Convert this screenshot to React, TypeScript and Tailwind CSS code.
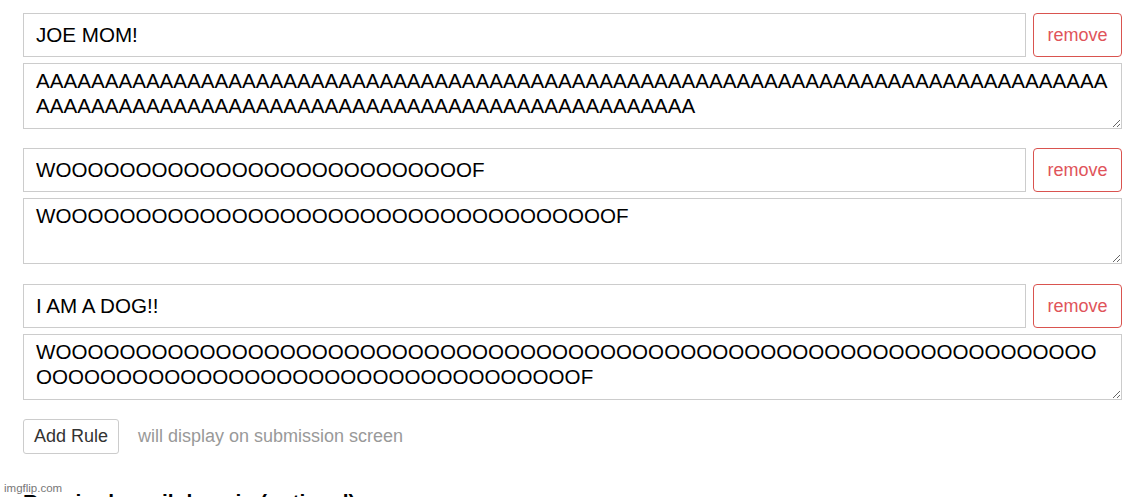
import React from "react";

const A = "A".repeat(126);
const T2 = "W" + "O".repeat(26) + "F";
const W2 = "W" + "O".repeat(35) + "F";
const W3 = "W" + "O".repeat(99) + "F";

function Rule({ title, body, className }: { title: string; body: string; className?: string }) {
  return (
    <div className={"flex flex-col gap-[6px] " + (className ?? "")}>
      <div className="flex gap-[7px]">
        <input
          readOnly
          value={title}
          className="h-[44px] flex-1 border border-[#cccccc] px-[12px] text-[20.6px] text-black outline-none"
        />
        <button className="h-[44px] w-[89px] rounded-[4px] border border-[#d9534f] text-[18px] text-[#e0545a]">
          remove
        </button>
      </div>
      <textarea
        readOnly
        value={body}
        className="block h-[66px] w-full border border-[#cccccc] px-[12px] pt-[4px] text-[20.6px] leading-[25px] text-black outline-none"
      />
    </div>
  );
}

export default function App() {
  return (
    <div
      className="relative h-[497px] w-[1146px] overflow-hidden bg-white"
      style={{ fontFamily: '"Liberation Sans", Arial, sans-serif' }}
    >
      <div className="ml-[23px] mr-[24px] pt-[13px]">
        <Rule title="JOE MOM!" body={A} />
        <Rule title={T2} body={W2} className="mt-[19px]" />
        <Rule title="I AM A DOG!!" body={W3} className="mt-[20px]" />
        <div className="mt-[19px] flex items-center gap-[19px]">
          <button className="h-[35px] w-[96px] rounded-[3px] border border-[#cccccc] text-[18px] text-[#333333]">
            Add Rule
          </button>
          <span className="text-[18px] text-[#999999]">will display on submission screen</span>
        </div>
        <h2 className="mt-[34px] text-[21px] font-bold leading-[28px] text-black">
          Required email domain (optional)
        </h2>
      </div>
      <div className="absolute left-[4px] top-[481px] text-[11.5px] leading-[14px] text-[#777777]">imgflip.com</div>
    </div>
  );
}
